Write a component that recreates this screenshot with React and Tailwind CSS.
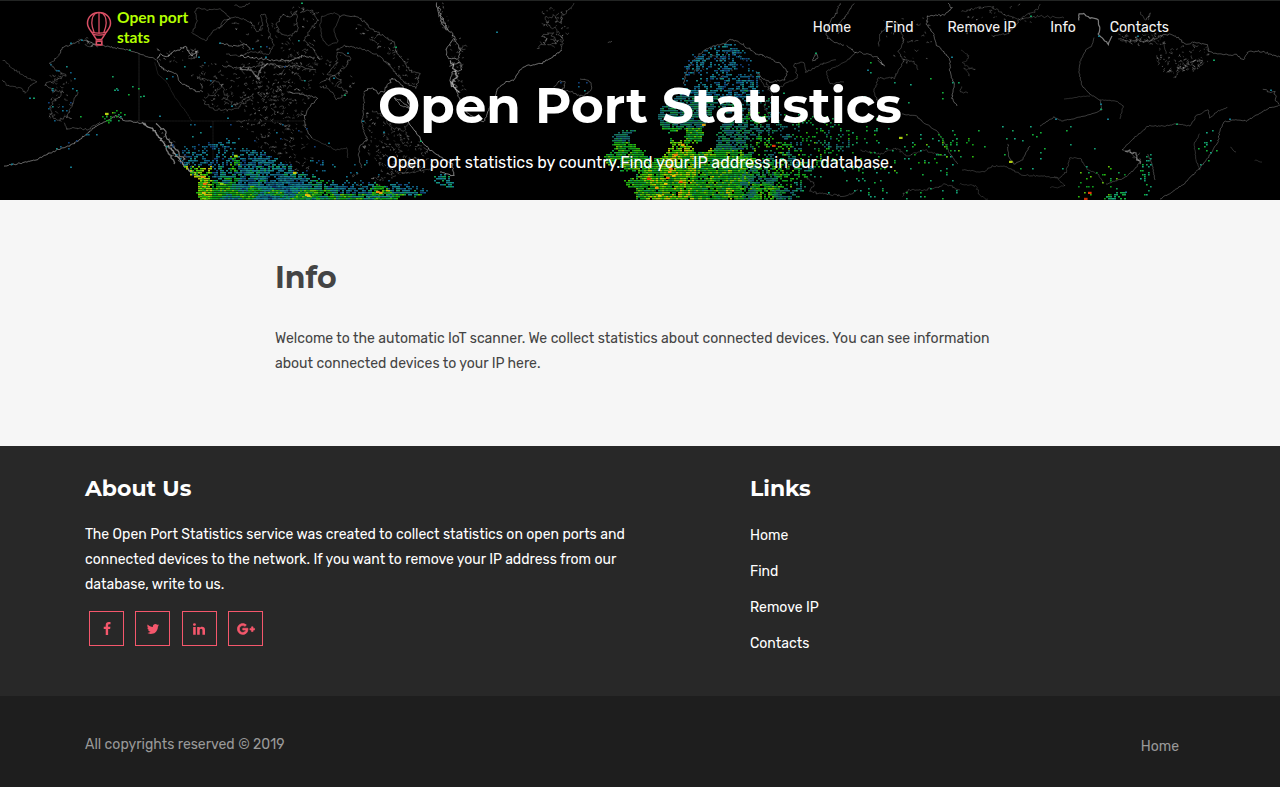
import React from "react";
import { FaGooglePlusG } from "react-icons/fa";

function createRandom(seed) {
  let s = seed;
  return () => {
    s = (s * 1664525 + 1013904223) % 4294967296;
    return s / 4294967296;
  };
}

function inside(poly, x, y) {
  let hit = false;
  for (let i = 0, j = poly.length - 1; i < poly.length; j = i++) {
    const [xi, yi] = poly[i];
    const [xj, yj] = poly[j];
    if (yi > y !== yj > y && x < ((xj - xi) * (y - yi)) / (yj - yi) + xi) hit = !hit;
  }
  return hit;
}

function lattice(ix, iy) {
  const v = Math.sin(ix * 127.1 + iy * 311.7) * 43758.5453;
  return v - Math.floor(v);
}

// Smooth value noise in 0-1
function noise(x, y) {
  const ix = Math.floor(x);
  const iy = Math.floor(y);
  const fx = x - ix;
  const fy = y - iy;
  const top = lattice(ix, iy) * (1 - fx) + lattice(ix + 1, iy) * fx;
  const bottom = lattice(ix, iy + 1) * (1 - fx) + lattice(ix + 1, iy + 1) * fx;
  return top * (1 - fy) + bottom * fy;
}

// [points, brightness 0-1, roughness, stroke width]
const COASTS = [
  [[[3, 60], [15, 70], [24, 76], [36, 82], [30, 86], [26, 93], [20, 88], [8, 86], [2, 80]], 0.3, 0.3, 0.8],
  [[[59, 56], [62, 48], [72, 44], [82, 40], [96, 44], [110, 47], [128, 50], [140, 54], [152, 58], [156, 60]], 0.42, 0.2, 0.9],
  [[[59, 56], [50, 63], [55, 70], [66, 75], [55, 80], [44, 85], [52, 90], [64, 92], [58, 98], [50, 106], [52, 117], [60, 120], [68, 116], [72, 104], [78, 92]], 0.35, 0.4, 0.8],
  [[[4, 166], [22, 163], [38, 159], [50, 153], [62, 148], [74, 144], [84, 136], [94, 128], [104, 122], [116, 116], [126, 121], [142, 123]], 0.5, 0.22, 1],
  [[[64, 122], [66, 129], [78, 128], [88, 130], [100, 122]], 0.35, 0.3, 0.8],
  [[[142, 123], [152, 128], [158, 136], [164, 144], [172, 150], [180, 160], [188, 170], [200, 176]], 0.65, 0.3, 1.4],
  [[[156, 124], [164, 130], [170, 142], [176, 150], [184, 160]], 0.6, 0.5, 1.2],
  [[[166, 146], [172, 158], [174, 164]], 0.55, 0.4, 1.4],
  [[[156, 60], [160, 54], [168, 56], [176, 50], [186, 47], [190, 55], [198, 52], [196, 58]], 0.55, 0.4, 1],
  [[[156, 60], [164, 70], [176, 74], [180, 82], [190, 88], [200, 92]], 0.5, 0.3, 0.9],
  [[[139, 53], [139, 121]], 0.2, 0, 0.8],
  [[[155, 62], [158, 74], [168, 84], [174, 96], [186, 112], [192, 121]], 0.16, 0.15, 0.8],
  [[[128, 121], [305, 121]], 0.14, 0, 0.8],
  [[[213, 121], [213, 160]], 0.14, 0, 0.8],
  [[[197, 8], [208, 10], [220, 9], [230, 18], [222, 26], [214, 30], [206, 41], [192, 33], [197, 22], [195, 12], [197, 8]], 0.32, 0.2, 0.8],
  [[[219, 28], [224, 20], [238, 17], [250, 22], [258, 32], [263, 24], [260, 15], [266, 14], [268, 28], [274, 46], [268, 54], [250, 52], [240, 56], [226, 54]], 0.34, 0.25, 0.8],
  [[[220, 43], [232, 46], [246, 44], [250, 50]], 0.5, 0.3, 0.9],
  [[[276, 24], [284, 14], [290, 18], [296, 12], [298, 30], [290, 36], [280, 34], [276, 24]], 0.36, 0.4, 0.8],
  [[[300, 12], [312, 10], [318, 20], [310, 30], [304, 40], [314, 50], [320, 60]], 0.36, 0.3, 0.8],
  [[[222, 66], [240, 68], [258, 66], [272, 64], [284, 66], [298, 66], [316, 70]], 0.4, 0.3, 0.9],
  [[[240, 68], [252, 70], [258, 79], [260, 70], [268, 64]], 0.45, 0.4, 1.3],
  [[[240, 56], [256, 58], [270, 60], [290, 60], [302, 56], [314, 58]], 0.5, 0.35, 1],
  [[[234, 5], [242, 7], [250, 3]], 0.35, 0.3, 0.8],
  [[[202, 100], [212, 109], [228, 110], [238, 108], [250, 98]], 0.32, 0.4, 0.8],
  [[[196, 78], [212, 80], [222, 84], [216, 94], [204, 97]], 0.3, 0.5, 0.8],
  [[[222, 84], [226, 96], [234, 106], [244, 100], [254, 94]], 0.32, 0.4, 0.8],
  [[[290, 92], [306, 95], [318, 98], [312, 104], [306, 112], [304, 122], [308, 134], [312, 138]], 0.45, 0.25, 0.9],
  [[[312, 138], [324, 144], [336, 150], [347, 148], [348, 158]], 0.25, 0.2, 0.8],
  [[[322, 16], [334, 13], [340, 16], [334, 30], [338, 42], [328, 46], [322, 38], [320, 24], [322, 16]], 0.28, 0.2, 0.8],
  [[[340, 16], [354, 16], [366, 22], [370, 28], [384, 36], [394, 42], [396, 52], [404, 62], [412, 72], [420, 74], [416, 88], [404, 82], [396, 74], [388, 64], [376, 54], [360, 48], [344, 46], [336, 50]], 0.35, 0.3, 0.9],
  [[[320, 84], [334, 76], [346, 66], [350, 58], [338, 52], [336, 64], [328, 74], [342, 80], [338, 86], [348, 92], [336, 100], [330, 90], [320, 86]], 0.35, 0.35, 0.8],
  [[[364, 92], [372, 88], [380, 94], [388, 86], [392, 78], [400, 84], [406, 92]], 0.5, 0.4, 0.9],
  [[[364, 92], [364, 108], [362, 122], [364, 132], [368, 140], [360, 146], [358, 156], [362, 168]], 0.42, 0.25, 0.8],
  [[[406, 92], [410, 110], [408, 122], [416, 132], [422, 142], [430, 150], [442, 158], [452, 164], [454, 176], [440, 172]], 0.6, 0.2, 1],
  [[[394, 98], [402, 106], [410, 108], [400, 100], [394, 98]], 0.55, 0.2, 0.9],
  [[[372, 110], [384, 116], [392, 128], [404, 130], [410, 120]], 0.28, 0.4, 0.8],
  [[[396, 172], [410, 173], [424, 170], [434, 168]], 0.3, 0.2, 0.8],
  [[[436, 3], [440, 18], [444, 28], [452, 32], [456, 42], [460, 50], [458, 60], [448, 58], [446, 50], [454, 38]], 0.5, 0.3, 1],
  [[[438, 6], [444, 22], [448, 30]], 0.5, 0.5, 0.9],
  [[[450, 66], [460, 62], [462, 70], [452, 72], [450, 80], [456, 90], [460, 100], [466, 112], [478, 120], [484, 122], [488, 112], [494, 98], [498, 88], [506, 82], [514, 80], [520, 70], [526, 66], [542, 63], [554, 56], [562, 50]], 0.52, 0.18, 1],
  [[[452, 62], [456, 76], [452, 84], [458, 92]], 0.65, 0.6, 1.3],
  [[[562, 50], [562, 38], [556, 30], [548, 24], [544, 18], [554, 16], [560, 24], [564, 14], [570, 8], [574, 3]], 0.3, 0.5, 0.8],
  [[[538, 48], [548, 40], [542, 36], [552, 34], [556, 42], [548, 44]], 0.35, 0.6, 0.8],
  [[[554, 86], [560, 80], [566, 82], [562, 90], [572, 92], [580, 96], [588, 94], [592, 86], [588, 80], [580, 79]], 0.4, 0.3, 0.8],
  [[[608, 43], [612, 41]], 0.4, 0.2, 0.8],
  [[[684, 84], [686, 72], [694, 60], [704, 50], [714, 46], [724, 44], [730, 40], [740, 42], [748, 48], [756, 54], [770, 58], [780, 64], [787, 72], [784, 80], [770, 82], [762, 78], [756, 72]], 0.4, 0.3, 0.9],
  [[[694, 74], [700, 64], [712, 56], [722, 60], [730, 50]], 0.28, 0.5, 0.8],
  [[[756, 72], [764, 86], [776, 90], [788, 82], [798, 78], [794, 64], [804, 62], [806, 72], [818, 66], [828, 62], [836, 60]], 0.32, 0.25, 0.8],
  [[[812, 60], [816, 54], [818, 58], [812, 61]], 0.4, 0.3, 0.9],
  [[[840, 3], [836, 14], [830, 22], [826, 32], [828, 38], [836, 43], [844, 45]], 0.38, 0.25, 0.9],
  [[[854, 3], [846, 16], [840, 22], [838, 34]], 0.35, 0.25, 0.9],
  [[[846, 46], [856, 52], [868, 54], [878, 58], [884, 66], [878, 60]], 0.38, 0.3, 0.9],
  [[[856, 52], [846, 62], [832, 68], [826, 72], [830, 84], [844, 82]], 0.28, 0.2, 0.8],
  [[[878, 46], [880, 34], [890, 22], [898, 24], [904, 40], [898, 52], [904, 60], [898, 72], [894, 78], [878, 78], [874, 92], [878, 102]], 0.32, 0.3, 0.8],
  [[[904, 60], [914, 62], [918, 70]], 0.3, 0.3, 0.8],
  [[[928, 16], [926, 24], [934, 34], [936, 44], [944, 52], [950, 60], [950, 72], [954, 84], [952, 98], [957, 106]], 0.4, 0.22, 1],
  [[[928, 16], [944, 15], [952, 8], [948, 3]], 0.45, 0.35, 0.9],
  [[[962, 86], [960, 92], [968, 93]], 0.3, 0.2, 0.8],
  [[[992, 36], [1008, 34], [1016, 24], [1024, 16], [1034, 12], [1040, 4]], 0.3, 0.4, 0.8],
  [[[962, 12], [978, 8], [990, 6], [1004, 14], [1020, 20], [1038, 16], [1056, 17], [1064, 18]], 0.28, 0.4, 0.8],
  [[[1079, 20], [1079, 14], [1084, 14], [1090, 18], [1098, 19], [1100, 30], [1098, 34], [1102, 38], [1108, 44], [1112, 36]], 0.6, 0.2, 1.2],
  [[[1094, 38], [1092, 46], [1086, 50], [1080, 62], [1079, 72], [1082, 86], [1090, 94], [1100, 100], [1102, 110], [1092, 114], [1076, 118], [1062, 121], [1054, 117], [1040, 126]], 0.32, 0.12, 0.9],
  [[[1100, 100], [1116, 101], [1123, 106], [1120, 119]], 0.3, 0.13, 0.8],
  [[[1090, 96], [1078, 97], [1064, 99]], 0.25, 0.13, 0.8],
  [[[1118, 38], [1128, 42], [1136, 40], [1148, 42], [1160, 36], [1170, 34], [1178, 38], [1184, 44], [1196, 42], [1206, 44], [1210, 52], [1220, 54], [1236, 55], [1244, 60], [1248, 52], [1260, 51], [1280, 57]], 0.38, 0.3, 0.9],
  [[[1164, 42], [1166, 54]], 0.3, 0.2, 0.8],
  [[[1140, 12], [1146, 20], [1150, 14], [1148, 20]], 0.28, 0.4, 0.8],
  [[[1280, 105], [1270, 108], [1258, 114], [1246, 121], [1236, 120], [1224, 122], [1220, 130], [1218, 142], [1208, 158], [1196, 172], [1184, 184], [1172, 192], [1160, 199]], 0.35, 0.2, 0.9],
  [[[1228, 107], [1216, 112], [1210, 118], [1208, 110], [1196, 116], [1190, 126], [1176, 124], [1164, 126], [1148, 126], [1134, 138], [1122, 150], [1130, 152], [1140, 162], [1136, 168], [1124, 178], [1106, 184]], 0.34, 0.18, 0.8],
  [[[1200, 134], [1194, 144], [1196, 160], [1200, 170]], 0.28, 0.2, 0.8],
  [[[1148, 154], [1152, 164], [1155, 180]], 0.35, 0.15, 0.9],
  [[[1126, 150], [1136, 154], [1140, 164]], 0.5, 0.5, 1.2],
  [[[1104, 184], [1098, 174], [1088, 170], [1080, 158], [1070, 158], [1066, 172], [1060, 178], [1040, 176], [1022, 175], [1004, 166], [992, 166], [984, 172], [962, 170]], 0.28, 0.2, 0.8],
  [[[1008, 144], [1008, 156], [1014, 164], [1022, 160], [1030, 146]], 0.34, 0.2, 0.9],
  [[[960, 184], [976, 186], [980, 196], [988, 199]], 0.22, 0.3, 0.8],
  [[[1054, 176], [1066, 186], [1050, 188]], 0.22, 0.3, 0.8],
  [[[902, 114], [916, 116], [926, 124], [938, 132], [944, 142], [950, 154], [958, 164]], 0.32, 0.15, 0.9],
  [[[860, 150], [880, 154], [896, 148], [908, 156], [924, 150], [946, 156]], 0.24, 0.35, 0.8],
  [[[902, 196], [908, 190], [924, 190], [934, 188], [946, 184], [960, 190]], 0.28, 0.3, 0.8],
  [[[804, 176], [814, 184], [810, 192], [826, 194], [846, 196], [858, 190]], 0.3, 0.35, 0.8],
  [[[766, 82], [772, 96], [764, 106], [770, 118]], 0.28, 0.4, 0.8],
  [[[1230, 147], [1236, 152]], 0.3, 0.2, 0.8],
  [[[1254, 160], [1262, 162]], 0.25, 0.2, 0.8],
  [[[1264, 90], [1274, 92], [1278, 104]], 0.35, 0.4, 0.9],
  [[[962, 50], [970, 56], [962, 64], [976, 70], [964, 68], [970, 76]], 0.22, 0.4, 0.8],
];

function buildCoast([points, , rough], seed) {
  const rnd = createRandom(seed * 7919 + 13);
  const out = [];
  for (let i = 0; i < points.length - 1; i++) {
    const [ax, ay] = points[i];
    const [bx, by] = points[i + 1];
    const n = Math.max(1, Math.round(Math.hypot(bx - ax, by - ay) / 1.5));
    for (let k = 0; k < n; k++) {
      const t = k / n;
      const amp = rough * 6.5;
      out.push(
        `${(ax + (bx - ax) * t + (rnd() - 0.5) * amp).toFixed(1)} ${(ay + (by - ay) * t + (rnd() - 0.5) * amp).toFixed(1)}`
      );
    }
  }
  out.push(points[points.length - 1].join(" "));
  return "M" + out.join("L");
}

const COAST_PATHS = COASTS.map((c, i) => ({ d: buildCoast(c, i + 1), opacity: c[1] * 0.82, width: c[3] }));

// Lakes and islets: [polygon, stroke count]
const LAKES = [
  [[[200, 60], [300, 62], [315, 90], [300, 110], [270, 118], [215, 112], [190, 80]], 260],
  [[[232, 120], [300, 112], [312, 150], [308, 178], [262, 150]], 210],
  [[[250, 70], [312, 95], [296, 130], [262, 120]], 130],
  [[[365, 110], [405, 130], [440, 160], [420, 172], [385, 176], [362, 150]], 300],
  [[[320, 50], [350, 50], [356, 88], [324, 88]], 36],
  [[[370, 30], [400, 50], [420, 74], [408, 88], [380, 56]], 70],
  [[[350, 22], [372, 30], [396, 50], [404, 66], [390, 60], [368, 38]], 80],
  [[[690, 70], [725, 45], [760, 55], [765, 110], [745, 130]], 60],
  [[[1160, 48], [1210, 46], [1208, 66], [1176, 78], [1152, 66]], 120],
  [[[1174, 60], [1204, 58], [1196, 70], [1178, 70]], 60],
  [[[1118, 34], [1170, 34], [1168, 46], [1120, 44]], 60],
  [[[154, 126], [170, 134], [198, 176], [172, 156]], 130],
  [[[1124, 150], [1142, 152], [1142, 166]], 16],
  [[[448, 34], [462, 40], [464, 96], [452, 84]], 70],
  [[[434, 3], [444, 3], [452, 34], [444, 34]], 30],
  [[[540, 10], [572, 6], [562, 48], [540, 46]], 44],
  [[[960, 6], [1040, 4], [1030, 26], [966, 34]], 40],
  [[[880, 20], [940, 10], [930, 70], [884, 66]], 34],
  [[[228, 22], [270, 20], [300, 50], [240, 56]], 56],
  [[[280, 50], [320, 48], [320, 76], [286, 72]], 60],
  [[[290, 5], [320, 5], [318, 50], [296, 50]], 30],
  [[[350, 174], [395, 176], [390, 188], [350, 188]], 24],
  [[[76, 38], [98, 42], [96, 50], [78, 46]], 20],
  [[[50, 74], [72, 74], [70, 124], [48, 124]], 40],
  [[[156, 50], [198, 48], [196, 58], [158, 64]], 40],
];

function buildLakes() {
  const rnd = createRandom(4242);
  let d = "";
  for (const [poly, count] of LAKES) {
    const xs = poly.map((p) => p[0]);
    const ys = poly.map((p) => p[1]);
    const x0 = Math.min(...xs);
    const y0 = Math.min(...ys);
    const w = Math.max(...xs) - x0;
    const h = Math.max(...ys) - y0;
    for (let i = 0; i < count; i++) {
      let x = x0 + rnd() * w;
      let y = y0 + rnd() * h;
      if (!inside(poly, x, y)) continue;
      d += `M${x.toFixed(1)} ${y.toFixed(1)}`;
      const n = 1 + Math.floor(rnd() * 3);
      for (let k = 0; k < n; k++) {
        x += (rnd() - 0.4) * 4;
        y += (rnd() - 0.5) * 3.4;
        d += `L${x.toFixed(1)} ${y.toFixed(1)}`;
      }
    }
  }
  return d;
}
const LAKE_PATH = buildLakes();

const PALETTES = {
  cold: ["#0f5f86", "#147a96", "#178a86", "#12607a", "#123f7a"],
  mixed: ["#14748c", "#149a7a", "#12a050", "#147e92", "#19868e"],
  warm: ["#0f9e1e", "#12a414", "#2cb80c", "#0e8628", "#0f9e1e", "#12a050", "#66c00a"],
  hot: ["#3cc808", "#86d808", "#a8d00a", "#1cb414", "#c8c00a", "#5cd008", "#2cb80c"],
  nordic: ["#176a66", "#158055", "#146870", "#169040", "#175c72"],
  sparse: ["#129a70", "#14a060", "#16a884", "#12b03a"],
};

// [polygon, density(x, y), palette(x, y)]
const REGIONS = [
  [[[198, 200], [198, 178], [186, 170], [178, 148], [210, 140], [240, 146], [268, 152], [290, 164], [320, 179], [345, 181], [372, 184], [400, 180], [428, 189], [422, 194], [400, 196], [392, 200]],
    (x, y) => (x > 320 ? 0.35 + (y - 180) / 26 : y < 165 ? 0.14 + Math.max(0, y - 138) / 80 : 0.42 + (y - 165) / 40),
    (x, y) => {
      const n = noise(x / 9 + 3, y / 6);
      if (y < 166) return "cold";
      if (x < 212) return "hot";
      if (x > 385 && y < 190) return "cold";
      if (n > 0.62 && y > 176) return "warm";
      return n > 0.4 ? "mixed" : y > 192 && x > 320 ? "warm" : "cold";
    }],
  [[[230, 148], [262, 152], [285, 166], [304, 180], [310, 200], [250, 200], [232, 176]], () => 0.5, (x, y) => (x < 240 && y < 172 ? "warm" : "cold")],
  [[[198, 172], [204, 172], [207, 200], [198, 200]], () => 0.95, () => "hot"],
  [[[296, 190], [318, 190], [322, 200], [292, 200]], () => 0.8, () => "warm"],
  [[[368, 190], [390, 187], [394, 197], [370, 199]], () => 0.7, () => "hot"],
  [[[430, 180], [444, 173], [455, 184], [448, 189], [436, 184]], () => 0.75, () => "mixed"],
  [[[45, 60], [78, 70], [80, 125], [48, 125]], () => 0.06, () => "cold"],
  [[[80, 65], [145, 65], [145, 118], [80, 118]], () => 0.014, () => "sparse"],
  [[[98, 114], [122, 108], [124, 116], [102, 126]], () => 0.3, () => "warm"],
  [[[52, 150], [96, 128], [98, 134], [58, 154]], () => 0.12, () => "cold"],
  [[[160, 140], [178, 146], [198, 176], [186, 176]], () => 0.22, () => "cold"],
  [[[180, 120], [330, 120], [330, 180], [198, 150]], () => 0.022, () => "cold"],
  [[[208, 141], [234, 140], [232, 148], [210, 148]], () => 0.4, () => "cold"],
  [[[196, 30], [330, 30], [330, 90], [160, 80]], () => 0.004, () => "cold"],
  [[[310, 160], [372, 158], [390, 182], [320, 182]], () => 0.1, () => "cold"],
  [[[560, 78], [586, 78], [588, 92], [562, 88]], () => 0.08, () => "cold"],
  [[[614, 134], [620, 128], [634, 130], [628, 136], [634, 144], [642, 150], [650, 158], [644, 170], [618, 172], [620, 160], [606, 166], [604, 155], [616, 150], [612, 142]], () => 0.9, (x, y) => (y < 142 ? "nordic" : "warm")],
  [[[623, 181], [634, 177], [642, 168], [654, 158], [668, 152], [670, 138], [684, 143], [698, 152], [716, 147], [742, 150], [746, 170], [740, 200], [636, 200], [632, 188]],
    () => 0.97, (x, y) => (noise(x / 9, y / 9) + (x > 658 && x < 694 && y > 146 && y < 190 ? 0.35 : 0) > 0.7 ? "hot" : "warm")],
  [[[657, 112], [664, 103], [678, 96], [684, 84], [682, 68], [696, 52], [724, 43], [738, 42], [736, 60], [730, 76], [722, 88], [716, 98], [712, 112], [704, 124], [700, 140], [692, 144], [684, 143], [684, 128], [670, 132], [658, 124]],
    (x, y) => (y < 90 ? 0.38 : 0.86), (x, y) => (y > 126 ? "warm" : y < 95 ? "cold" : "nordic")],
  [[[724, 43], [738, 40], [752, 50], [760, 76], [756, 100], [746, 112], [722, 114], [716, 104], [726, 88], [732, 70]],
    (x, y) => (y < 76 ? 0.2 : 0.56), (x, y) => (y > 96 ? "nordic" : "cold")],
  [[[722, 120], [748, 114], [746, 150], [714, 149], [716, 134]], () => 0.8, () => "nordic"],
  [[[744, 76], [768, 88], [796, 110], [830, 116], [858, 136], [858, 150], [830, 162], [812, 170], [796, 200], [738, 200], [744, 130]],
    (x, y) => Math.max(0.03, (0.34 - (x - 745) / 420 + (y - 130) / 320) * (0.4 + noise(x / 8, y / 7) * 1.3)), (x, y) => (noise(x / 10, y / 8) > 0.5 ? "nordic" : "warm")],
  [[[738, 152], [780, 162], [790, 176], [784, 200], [738, 200]], (x, y) => Math.max(0.05, (0.8 - (x - 738) / 80) * (0.5 + noise(x / 6, y / 6))), () => "warm"],
  [[[790, 110], [900, 130], [960, 136], [958, 176], [900, 176], [840, 170]], () => 0.08, (x, y) => (noise(x, y) > 0.6 ? "warm" : "sparse")],
  [[[790, 176], [880, 170], [960, 180], [960, 200], [790, 200]], () => 0.05, () => "sparse"],
  [[[830, 60], [960, 60], [960, 140], [850, 130]], () => 0.012, () => "sparse"],
  [[[940, 136], [975, 136], [976, 160], [944, 158]], () => 0.14, () => "warm"],
  [[[960, 125], [1100, 125], [1100, 176], [960, 176]], () => 0.022, () => "sparse"],
  [[[1076, 168], [1130, 166], [1128, 200], [1080, 200]], () => 0.07, () => "warm"],
  [[[1106, 193], [1126, 190], [1126, 200], [1106, 200]], () => 0.45, () => "sparse"],
  [[[1138, 155], [1150, 155], [1152, 200], [1144, 200]], () => 0.2, () => "sparse"],
  [[[1196, 126], [1222, 126], [1216, 150], [1196, 172]], () => 0.09, () => "sparse"],
];

const HOTSPOTS = [
  [203, 177, "#e89a10"], [205, 184, "#f06a10"], [204, 193, "#e0b810"], [307, 195, "#f0b010"], [309, 196, "#d8d010"],
  [378, 192, "#f08c10"], [381, 193, "#e0a010"], [236, 156, "#a0d010"], [704, 125, "#d8a010"], [774, 146, "#e03808"],
  [668, 178, "#f06008"], [670, 172, "#f09008"], [649, 179, "#e83008"], [681, 182, "#f05008"], [676, 155, "#f07808"],
  [683, 145, "#e8a808"], [657, 188, "#f09008"], [672, 165, "#f0a008"], [671, 169, "#f08008"], [1090, 193, "#e83808"],
  [1086, 199, "#c83008"], [295, 173, "#c8c810"], [222, 184, "#90d010"], [107, 114, "#b8d010"], [1011, 162, "#b0d010"],
  [901, 138, "#a8c810"], [666, 184, "#e0c008"], [674, 176, "#e8b808"], [660, 196, "#d0c808"],
];

const STRAY_DOTS = [
  [115, 90], [118, 90], [30, 98], [34, 98], [82, 40], [71, 43], [130, 50], [220, 43], [266, 57], [302, 3], [199, 57],
  [497, 32], [816, 53], [71, 167], [12, 164], [1031, 16], [1099, 36], [1138, 36], [1214, 60], [1271, 90], [1101, 104],
  [1101, 109], [1056, 119], [1108, 119], [1177, 124], [1230, 119], [868, 70], [784, 93], [952, 57], [1126, 192], [396, 47],
  [348, 53], [334, 78], [345, 95], [363, 121], [384, 132], [421, 141], [329, 143], [160, 116], [144, 96], [232, 106], [228, 118],
];

function buildDots() {
  const rnd = createRandom(987);
  const layers = {};
  const add = (x, y, color, w, h) => {
    layers[color] = (layers[color] || "") + `M${x.toFixed(1)} ${y.toFixed(1)}h${w}v${h}h-${w}z`;
  };
  for (const [poly, density, palette] of REGIONS) {
    const xs = poly.map((p) => p[0]);
    const ys = poly.map((p) => p[1]);
    const stepX = 2;
    const stepY = 2;
    const x0 = Math.floor(Math.min(...xs) / stepX) * stepX;
    const y0 = Math.floor(Math.min(...ys) / stepY) * stepY;
    for (let y = y0; y < Math.min(200, Math.max(...ys)); y += stepY) {
      for (let x = x0; x < Math.max(...xs); x += stepX) {
        if (!inside(poly, x + (rnd() - 0.5) * 5, y + (rnd() - 0.5) * 4)) continue;
        const d = density(x, y);
        const local = d > 0.75 || d < 0.15 ? d * (d < 0.15 ? 0.75 : 1) : d * (0.5 + noise(x / 7, y / 5));
        if (rnd() > local) continue;
        const colors = PALETTES[palette(x, y)];
        add(x, y, colors[Math.floor(rnd() * colors.length)], d > 0.3 ? 2 : 1.7, 1.45);
      }
    }
  }
  STRAY_DOTS.forEach(([x, y], i) => add(x - 1, y - 0.5, i % 3 ? "#14788c" : "#12a060", 2, 1.4));
  HOTSPOTS.forEach(([x, y, c]) => add(x - 2, y - 1.2, c, 3.6, 2.2));
  return Object.entries(layers);
}
const DOT_LAYERS = buildDots();

function WorldMap() {
  return (
    <svg className="absolute inset-0 h-[200px] w-[1280px]" viewBox="0 0 1280 200" aria-hidden="true">
      <rect width="1280" height="200" fill="#000" />
      <path d={LAKE_PATH} fill="none" stroke="#fff" strokeOpacity="0.27" strokeWidth="0.8" />
      {COAST_PATHS.map((c, i) => (
        <path key={i} d={c.d} fill="none" stroke="#fff" strokeOpacity={c.opacity} strokeWidth={c.width} />
      ))}
      {DOT_LAYERS.map(([color, d]) => (
        <path key={color} d={d} fill={color} />
      ))}
      <rect width="1280" height="1" fill="#222423" />
    </svg>
  );
}

function Balloon() {
  return (
    <svg className="mt-[11px] h-[35px] w-[26px]" viewBox="0 0 26 35" fill="none" stroke="#d94f64" strokeWidth="1.5">
      <path d="M13 1.500C6.400 1.500 1.500 6 1.500 12.200c0 4.400 2.700 6.800 4.700 9.600l4.200 6.700h5.200l4.200-6.700c2-2.800 4.700-5.200 4.700-9.600C24.500 6 19.600 1.500 13 1.500z" />
      <path d="M11 1.500C7.600 3 5.800 7 5.800 12c0 4 1.600 7.400 2.600 10M15 1.500c3.400 1.500 5.200 5.500 5.200 10.500 0 4-1.600 7.400-2.600 10M13 1.500v21" strokeWidth="1.300" />
      <path d="M5.500 21c4 1.500 11 1.500 15 0M6.800 23.400c4 1 8.400 1 12.400 0" strokeWidth="1.300" />
      <path d="M10.400 30.200h5.400v3.600h-5.400z" strokeWidth="1.700" />
    </svg>
  );
}

const FACEBOOK =
  "M1343 12v264h-157q-86 0-116 36t-30 108v189h293l-39 296h-254v759h-306v-759h-255v-296h255v-218q0-186 104-288.5t277-102.5q147 0 228 12z";
const TWITTER =
  "M1684 408q-67 98-162 167 1 14 1 42 0 130-38 259.5t-115.5 248.5-184.5 210.5-258 146-323 54.5q-271 0-496-145 35 4 78 4 225 0 401-138-105-2-188-64.5t-114-159.5q33 5 61 5 43 0 85-11-112-23-185.5-111.5t-73.5-205.500v-4q68 38 146 41-66-44-105-115t-39-154q0-88 44-163 121 149 294.5 238.5t371.5 99.5q-8-38-8-74 0-134 94.5-228.5t228.5-94.5q140 0 236 102 109-21 205-78-37 115-142 178 93-10 186-50z";
const LINKEDIN =
  "M477 625v991h-330v-991h330zm21-306q1 73-50.5 122t-135.5 49h-2q-82 0-132-49t-50-122q0-74 51.5-122.5t134.5-48.5 133 48.5 51 122.5zm1166 729v568h-329v-530q0-105-40.5-164.5t-126.5-59.5q-63 0-105.5 34.5t-63.5 85.5q-11 30-11 81v553h-329q2-399 2-647t-1-296l-1-48h329v144h-2q20-32 41-56t56.5-52 87-43.5 114.5-15.5q171 0 275 113.5t104 332.5z";

function Glyph({ d }) {
  return (
    <svg className="h-[14px] w-[14px]" viewBox="0 0 1792 1792" fill="currentColor">
      <path d={d} />
    </svg>
  );
}

const NAV = ["Home", "Find", "Remove IP", "Info", "Contacts"];
const LINKS = ["Home", "Find", "Remove IP", "Contacts"];
const SOCIAL = [
  { name: "Facebook", icon: <Glyph d={FACEBOOK} /> },
  { name: "Twitter", icon: <Glyph d={TWITTER} /> },
  { name: "LinkedIn", icon: <Glyph d={LINKEDIN} /> },
  {
    name: "Google Plus",
    icon: <FaGooglePlusG className="h-[18px] w-[18px]" stroke="currentColor" strokeWidth="22" />,
  },
];

export default function App() {
  return (
    <div className="flex min-h-[787px] w-full flex-col bg-[#f6f6f6] font-['Rubik',sans-serif] text-sm text-[#444]">
      <header className="relative h-[200px] overflow-hidden bg-black text-white">
        <WorldMap />
        <div className="relative mx-auto flex w-[1110px] justify-between">
          <a className="flex h-[54px] pl-px">
            <Balloon />
            <span className="ml-[5px] w-[84px] pt-[7px] font-['Lato',sans-serif] text-[15.500px] leading-5 font-bold text-[#b4ff00]">
              Open port stats
            </span>
          </a>
          <nav className="flex gap-[34px] pt-[17px] pr-[26px] leading-[21px] text-[#f4f4f4]">
            {NAV.map((item) => (
              <a key={item}>{item}</a>
            ))}
          </nav>
        </div>
        <div className="relative text-center">
          <h1 className="mt-[22px] font-['Montserrat',sans-serif] text-[50px] leading-[60px] font-bold">
            Open Port Statistics
          </h1>
          <p className="mt-[14px] text-base leading-[26px]">
            Open port statistics by country.Find your IP address in our database.
          </p>
        </div>
      </header>

      <main className="h-[246px] pt-[60px]">
        <div className="mx-auto w-[730px]">
          <h2 className="font-['Montserrat',sans-serif] text-[30px] leading-9 font-bold">Info</h2>
          <p className="mt-[30px] leading-[25px]">
            Welcome to the automatic IoT scanner. We collect statistics about connected devices. You can see information
            about connected devices to your IP here.
          </p>
        </div>
      </main>

      <footer className="text-white">
        <div className="h-[250px] bg-[#282828] pt-[30px]">
          <div className="mx-auto flex w-[1110px]">
            <section className="w-[665px]">
              <h3 className="font-['Montserrat',sans-serif] text-[22px] leading-[26px] font-bold">About Us</h3>
              <p className="mt-5 w-[555px] leading-[25px]">
                The Open Port Statistics service was created to collect statistics on open ports and connected devices to
                the network. If you want to remove your IP address from our database, write to us.
              </p>
              <div className="mt-[14px] ml-1 flex gap-[11.400px]">
                {SOCIAL.map(({ name, icon }) => (
                  <a
                    key={name}
                    aria-label={name}
                    className="flex h-[35px] w-[35px] items-center justify-center border border-[#f5576c] text-[#f5576c]"
                  >
                    {icon}
                  </a>
                ))}
              </div>
            </section>
            <section>
              <h3 className="font-['Montserrat',sans-serif] text-[22px] leading-[26px] font-bold">Links</h3>
              <ul className="mt-[21px]">
                {LINKS.map((item) => (
                  <li key={item} className="mb-[11px] leading-[25px]">
                    {item}
                  </li>
                ))}
              </ul>
            </section>
          </div>
        </div>
        <div className="h-[91px] bg-[#1e1e1e] text-[#999]">
          <div className="mx-auto flex w-[1110px] justify-between pt-9 pr-4 leading-[25px]">
            <p>All copyrights reserved © 2019</p>
            <a className="pt-0.5">Home</a>
          </div>
        </div>
      </footer>
    </div>
  );
}
